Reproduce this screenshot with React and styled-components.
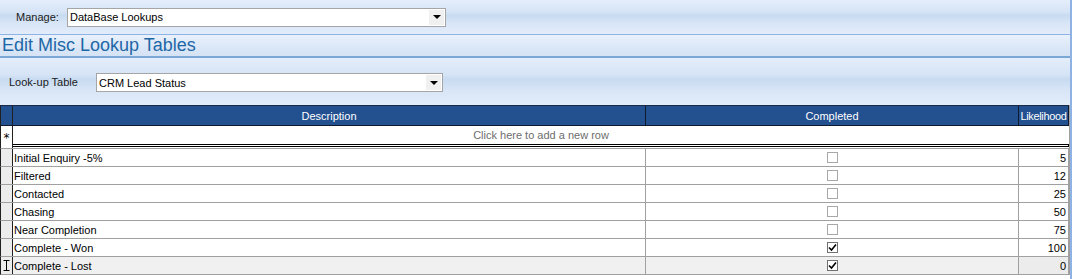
import React from 'react'
import styled, { createGlobalStyle } from 'styled-components'

const GlobalStyle = createGlobalStyle`
    html, body {
        margin: 0;
        padding: 0;
        background: #ffffff;
    }
    body {
        font-family: "Liberation Sans", Arial, sans-serif;
        font-size: 11px;
        color: #000000;
    }
`

const rows = [
    { name: 'Initial Enquiry -5%', done: false, chance: 5 },
    { name: 'Filtered', done: false, chance: 12 },
    { name: 'Contacted', done: false, chance: 25 },
    { name: 'Chasing', done: false, chance: 50 },
    { name: 'Near Completion', done: false, chance: 75 },
    { name: 'Complete - Won', done: true, chance: 100 },
    { name: 'Complete - Lost', done: true, chance: 0, current: true },
]

const cols = '12px 633px 373px 50px'

const Page = styled.div`
    width: 1072px;
    height: 279px;
    box-sizing: border-box;
    overflow: hidden;
    border-right: 2px solid #8db2e3;
    display: flex;
    flex-direction: column;
`

const Panel = styled.div`
    height: ${(p) => p.$height}px;
    flex-shrink: 0;
    display: flex;
    align-items: center;
    padding-left: ${(p) => p.$pad}px;
    background: linear-gradient(to bottom, #e4eefb 0%, #d6e4f6 35%, #c8dbf1 45%, #d9e6f7 70%, #e2ecfa 100%);
    border-bottom: ${(p) => p.$line || 'none'};
`

const TitleBar = styled.div`
    height: 21px;
    flex-shrink: 0;
    display: flex;
    align-items: center;
    padding-left: 2px;
    background: linear-gradient(to bottom, #e9f1fc 0%, #dbe7f7 60%, #d4e3f5 100%);
    border-bottom: 2px solid #7ba7d4;
    color: #1e67a6;
    font-size: 18px;
`

const Label = styled.span`
    width: ${(p) => p.$width}px;
    flex-shrink: 0;
    color: #1a1a1a;
`

const Combo = styled.div`
    width: ${(p) => p.$width}px;
    height: 19px;
    box-sizing: border-box;
    border: 1px solid #a5a5a5;
    background: #ffffff;
    display: flex;
    align-items: center;
    padding-left: 2px;
    margin-top: ${(p) => p.$top || 0}px;
`

const ComboText = styled.span`
    flex: 1;
`

const ComboButton = styled.div`
    width: 15px;
    height: 15px;
    margin-right: 1px;
    background: #f0f0f0;
    display: flex;
    align-items: center;
    justify-content: center;
`

const Arrow = styled.div`
    width: 0;
    height: 0;
    border-left: 4px solid transparent;
    border-right: 4px solid transparent;
    border-top: 4px solid #000000;
`

const Grid = styled.div`
    border-top: 1px solid #1b2a44;
    width: 1069px;
    box-shadow: 1px 0 0 #a0a0a0;
`

const Row = styled.div`
    display: grid;
    grid-template-columns: ${cols};
    height: ${(p) => p.$height}px;
    border-left: 1px solid #202020;
    border-bottom: 1px solid ${(p) => p.$line};
    background: ${(p) => p.$bg};
    box-sizing: border-box;
`

const Cell = styled.div`
    border-right: 1px solid ${(p) => p.$line || '#a0a0a0'};
    display: flex;
    align-items: center;
    justify-content: ${(p) => p.$align || 'flex-start'};
    padding: 0 ${(p) => (p.$align === 'flex-end' ? 2 : 1)}px 0 1px;
    overflow: hidden;
    white-space: nowrap;
    color: ${(p) => p.$color || '#000000'};
    background: ${(p) => p.$bg || 'transparent'};
`

const HeadCell = styled(Cell)`
    color: #ffffff;
    justify-content: center;
    border-right-color: #0d1a30;
    padding: 1px 0 0 0;
    letter-spacing: ${(p) => p.$tight ? '-0.35px' : '0'};
`

const RowHead = styled.div`
    border-right: 1px solid #202020;
    background: ${(p) => p.$bg || '#ececec'};
    display: flex;
    align-items: center;
    justify-content: center;
`

const NewRow = styled.div`
    display: grid;
    grid-template-columns: 12px 1fr;
    height: 22px;
    border-left: 1px solid #202020;
    border-bottom: 1px solid #a0a0a0;
    background: #ffffff;
`

const NewBody = styled.div`
    display: flex;
    flex-direction: column;
`

const NewText = styled.div`
    height: 18px;
    display: flex;
    align-items: center;
    justify-content: center;
    color: #6d6d6d;
`

const Separator = styled.div`
    height: 1px;
    border-top: 1px solid #000000;
    border-bottom: 1px solid #000000;
    border-right: 1px solid #000000;
`

const Star = styled.span`
    font-family: "DejaVu Sans", sans-serif;
    font-size: 12px;
    line-height: 12px;
    margin-top: 2px;
`

const Box = styled.div`
    width: 11px;
    height: 11px;
    box-sizing: border-box;
    border: 1px solid ${(p) => (p.$checked ? '#707070' : '#a8a8a8')};
    background: #ffffff;
    display: flex;
    align-items: center;
    justify-content: center;
`

const Check = () => (
    <svg width="9" height="9" viewBox="0 0 9 9">
        <path d="M1 4.5 L3.5 7 L8 1.5" stroke="#000" strokeWidth="1.6" fill="none" />
    </svg>
)

const IBeam = () => (
    <svg width="7" height="11" viewBox="0 0 7 11">
        <path d="M0.5 0.5 H6.5 M3.5 0.5 V10.5 M0.5 10.5 H6.5" stroke="#000" strokeWidth="1" fill="none" />
    </svg>
)

export default function App() {
    return (
        <Page>
            <GlobalStyle />
            <Panel $height={34} $pad={16} $line="1px solid #8db2e3">
                <Label $width={51}>Manage:</Label>
                <Combo $width={379}>
                    <ComboText>DataBase Lookups</ComboText>
                    <ComboButton>
                        <Arrow />
                    </ComboButton>
                </Combo>
            </Panel>
            <TitleBar>Edit Misc Lookup Tables</TitleBar>
            <Panel $height={47} $pad={9}>
                <Label $width={87}>Look-up Table</Label>
                <Combo $width={347} $top={2}>
                    <ComboText>CRM Lead Status</ComboText>
                    <ComboButton>
                        <Arrow />
                    </ComboButton>
                </Combo>
            </Panel>
            <Grid>
                <Row $height={20} $bg="#23508f" $line="#0d1a30">
                    <RowHead $bg="#23508f" />
                    <HeadCell>Description</HeadCell>
                    <HeadCell>Completed</HeadCell>
                    <HeadCell $tight>Likelihood</HeadCell>
                </Row>
                <NewRow>
                    <RowHead $bg="#ffffff">
                        <Star>*</Star>
                    </RowHead>
                    <NewBody>
                        <NewText>Click here to add a new row</NewText>
                        <Separator />
                    </NewBody>
                </NewRow>
                {rows.map((r) => (
                    <Row key={r.name} $height={18} $bg={r.current ? '#f0f0f0' : '#ffffff'} $line="#a0a0a0">
                        <RowHead>{r.current && <IBeam />}</RowHead>
                        <Cell>{r.name}</Cell>
                        <Cell $align="center">
                            <Box $checked={r.done}>{r.done && <Check />}</Box>
                        </Cell>
                        <Cell $align="flex-end" $bg={r.current ? '#ececec' : 'transparent'}>
                            {r.chance}
                        </Cell>
                    </Row>
                ))}
            </Grid>
        </Page>
    )
}
